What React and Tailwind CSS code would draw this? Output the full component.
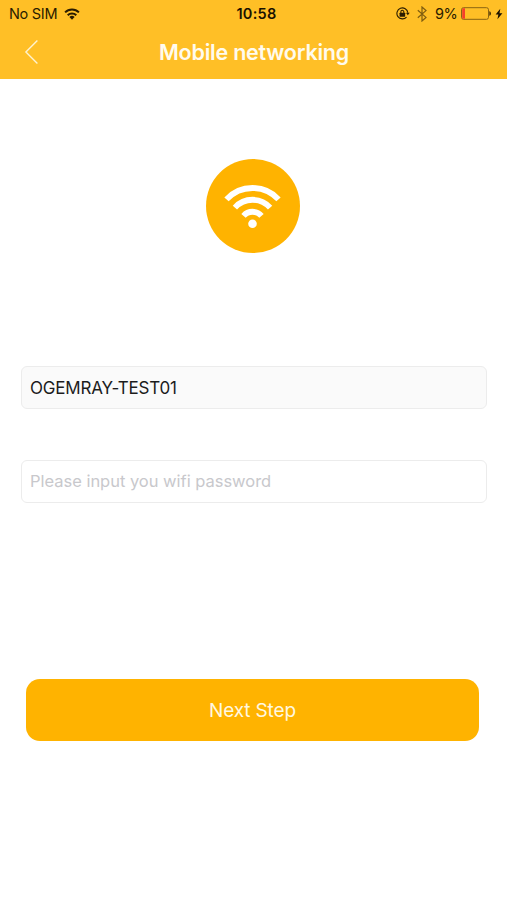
import React, { useState } from 'react';

const StatusBar = () => (
  <div className="flex h-[27px] items-center justify-between pl-[9px] pr-1 text-[14.5px] text-[#2a1c00]">
    <div className="flex flex-1 items-center gap-[7px]">
      <span className="whitespace-nowrap tracking-[-0.3px]">No SIM</span>
      <svg width="16" height="12" viewBox="0 0 16 12" fill="none" stroke="currentColor" strokeWidth="2">
        <path d="M1.1 4.4a9.8 9.8 0 0 1 13.8 0" />
        <path d="M3.7 7.3a6.1 6.1 0 0 1 8.6 0" />
        <path d="M8 11.8 5.4 9.1a3.7 3.7 0 0 1 5.2 0Z" fill="currentColor" stroke="none" />
      </svg>
    </div>
    <span className="pl-px text-[14.5px] font-semibold tracking-[0.3px] text-[#1a1100]">10:58</span>
    <div className="flex flex-1 items-center justify-end">
      {/* Rotation lock */}
      <svg width="14" height="13" viewBox="0 0 15 14" fill="none" stroke="currentColor">
        <path d="M11.3 10.8A5.9 5.9 0 1 1 12.7 6.2" strokeWidth="1.2" />
        <path d="M10.7 6.1h4L12.7 9Z" fill="currentColor" stroke="none" />
        <rect x="3.8" y="6.2" width="6" height="4.2" rx="0.5" fill="currentColor" stroke="none" />
        <path d="M5.2 6.5V5.2a1.6 1.6 0 0 1 3.2 0v1.3" strokeWidth="1.1" />
      </svg>
      <svg className="ml-[7px] opacity-60" width="10" height="16" viewBox="0 0 10 16" fill="none" stroke="currentColor" strokeWidth="1.2">
        <path d="M0.8 4.3 9 11.4 5 15V1l4 3.6-8.2 7.1" />
      </svg>
      <span className="ml-2 tracking-[-0.6px]">9%</span>
      <svg className="ml-[4px]" width="31" height="13" viewBox="0 0 31 13" fill="none">
        <rect x="0.5" y="0.7" width="27" height="11.6" rx="2" stroke="#8a6412" strokeWidth="1" />
        <path d="M2.2 1.2h1.8v10.6H2.2a1 1 0 0 1-1-1V2.2a1 1 0 0 1 1-1Z" fill="#f5402c" />
        <path d="M28.4 4.2c2 .6 2 4 0 4.6Z" fill="#2a1c00" />
      </svg>
      <svg className="ml-[3px]" width="8" height="12" viewBox="0 0 8 12">
        <path d="M5.3 0.8 0.6 6.6h2.8L2.4 11.2 7.4 5.2H4.5Z" fill="#1a1100" />
      </svg>
    </div>
  </div>
);

const App = () => {
  const [ssid, setSsid] = useState('OGEMRAY-TEST01');
  const [password, setPassword] = useState('');

  return (
    <div className="flex min-h-[900px] w-full flex-col bg-white font-['Inter',sans-serif]">
      <header className="h-[79px] bg-[#ffbf26]">
        <StatusBar />
        <div className="grid h-[50px] grid-cols-[60px_1fr_59px] items-center">
          <button className="pl-6" aria-label="Back">
            <svg width="15" height="26" viewBox="0 0 15 26" fill="none" stroke="#fff3d0" strokeWidth="1.4">
              <path d="M13.4 1.4 1.9 13l11.5 11.6" />
            </svg>
          </button>
          <h1 className="text-center text-[21.5px] font-semibold tracking-[-0.22px] text-[#fffbee]">
            Mobile networking
          </h1>
        </div>
      </header>

      <main className="flex flex-col px-[21px] pt-20">
        {/* Wifi badge */}
        <div className="mr-px h-[94px] w-[94px] self-center rounded-full bg-[#ffb300]">
          <svg width="94" height="94" viewBox="0 0 94 94" fill="none" stroke="#fff" strokeWidth="5.8">
            <path d="M20.5 40.4a35.3 35.3 0 0 1 52 0" />
            <path d="M28.9 48.6a23.7 23.7 0 0 1 35.2 0" />
            <path d="M37.5 56.8a12 12 0 0 1 18 0" />
            <circle cx="46.5" cy="64.7" r="4.3" fill="#fff" stroke="none" />
          </svg>
        </div>

        <input
          type="text"
          value={ssid}
          onChange={(e) => setSsid(e.target.value)}
          className="mt-[113px] h-[43px] w-[466px] rounded-md border border-[#ececec] bg-[#fafafa] px-2 text-[17px] tracking-[-0.2px] text-[#1c1c1c] outline-none"
        />
        <input
          type="text"
          value={password}
          onChange={(e) => setPassword(e.target.value)}
          placeholder="Please input you wifi password"
          className="mt-[51px] h-[43px] w-[466px] rounded-md border border-[#ececec] bg-white px-2 pb-0.5 text-[16.5px] tracking-[-0.02px] text-[#1c1c1c] outline-none placeholder:text-[#c8c8cc]"
        />

        <button className="ml-[5px] mt-44 h-[62px] w-[453px] rounded-[14px] bg-[#ffb300] pt-0.5 text-[19px] tracking-[-0.15px] text-[#fff8e1]">
          Next Step
        </button>
      </main>
    </div>
  );
};

export default App;
